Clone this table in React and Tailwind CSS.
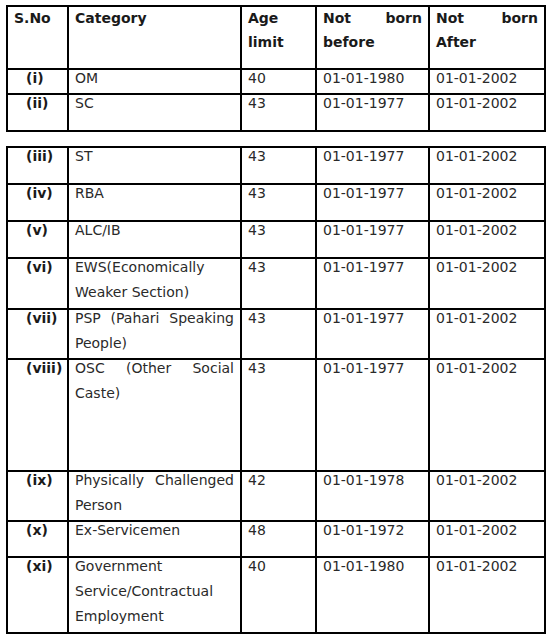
const font = { fontFamily: '"DejaVu Sans", Verdana, sans-serif' };

const head = ["S.No", "Category", "Age limit", "Not born before", "Not born After"];

const first = [
  { no: "(i)", cat: "OM", age: "40", before: "01-01-1980", after: "01-01-2002", h: "h-[25px]" },
  { no: "(ii)", cat: "SC", age: "43", before: "01-01-1977", after: "01-01-2002", h: "h-[37px]" },
];

const second = [
  { no: "(iii)", cat: "ST", age: "43", before: "01-01-1977", after: "01-01-2002", h: "h-[37px]" },
  { no: "(iv)", cat: "RBA", age: "43", before: "01-01-1977", after: "01-01-2002", h: "h-[37px]" },
  { no: "(v)", cat: "ALC/IB", age: "43", before: "01-01-1977", after: "01-01-2002", h: "h-[37px]" },
  { no: "(vi)", cat: "EWS(Economically Weaker Section)", age: "43", before: "01-01-1977", after: "01-01-2002", h: "h-[51px]" },
  { no: "(vii)", cat: "PSP (Pahari Speaking People)", age: "43", before: "01-01-1977", after: "01-01-2002", h: "h-[50px]" },
  { no: "(viii)", cat: "OSC (Other Social Caste)", age: "43", before: "01-01-1977", after: "01-01-2002", h: "h-[112px]" },
  { no: "(ix)", cat: "Physically Challenged Person", age: "42", before: "01-01-1978", after: "01-01-2002", h: "h-[50px]" },
  { no: "(x)", cat: "Ex-Servicemen", age: "48", before: "01-01-1972", after: "01-01-2002", h: "h-[36px]" },
  { no: "(xi)", cat: "Government Service/Contractual Employment", age: "40", before: "01-01-1980", after: "01-01-2002", h: "h-[76px]" },
];

function Cols() {
  return (
    <colgroup>
      <col className="w-[61px]" />
      <col className="w-[173px]" />
      <col className="w-[75px]" />
      <col className="w-[113px]" />
      <col className="w-[116px]" />
    </colgroup>
  );
}

function Row({ r }) {
  const td = "border-2 border-black align-top px-[6px] py-0";
  return (
    <tr className={r.h}>
      <td className={td + " pl-[18px]"}>
        <div className="-mt-1 font-bold text-[#1a1a1a]">{r.no}</div>
      </td>
      <td className={td}>
        <div className="-mt-1 text-justify">{r.cat}</div>
      </td>
      <td className={td}>
        <div className="-mt-1">{r.age}</div>
      </td>
      <td className={td}>
        <div className="-mt-1">{r.before}</div>
      </td>
      <td className={td}>
        <div className="-mt-1">{r.after}</div>
      </td>
    </tr>
  );
}

export default function App() {
  return (
    <div className="min-h-[641px] w-[551px] bg-white text-[14px] leading-[25px] text-[#2a2a2a]" style={font}>
      <table className="ml-[6px] mt-[5px] w-[538px] table-fixed border-collapse">
        <Cols />
        <thead>
          <tr className="h-[63px]">
            {head.map((h) => (
              <th key={h} className="border-2 border-black px-[6px] py-0 text-justify align-top font-bold leading-[24px] text-[#1a1a1a]">
                <div className="-mt-px">{h}</div>
              </th>
            ))}
          </tr>
        </thead>
        <tbody>
          {first.map((r) => (
            <Row key={r.no} r={r} />
          ))}
        </tbody>
      </table>
      <table className="ml-[6px] mt-[14px] w-[538px] table-fixed border-collapse">
        <Cols />
        <tbody>
          {second.map((r) => (
            <Row key={r.no} r={r} />
          ))}
        </tbody>
      </table>
    </div>
  );
}
